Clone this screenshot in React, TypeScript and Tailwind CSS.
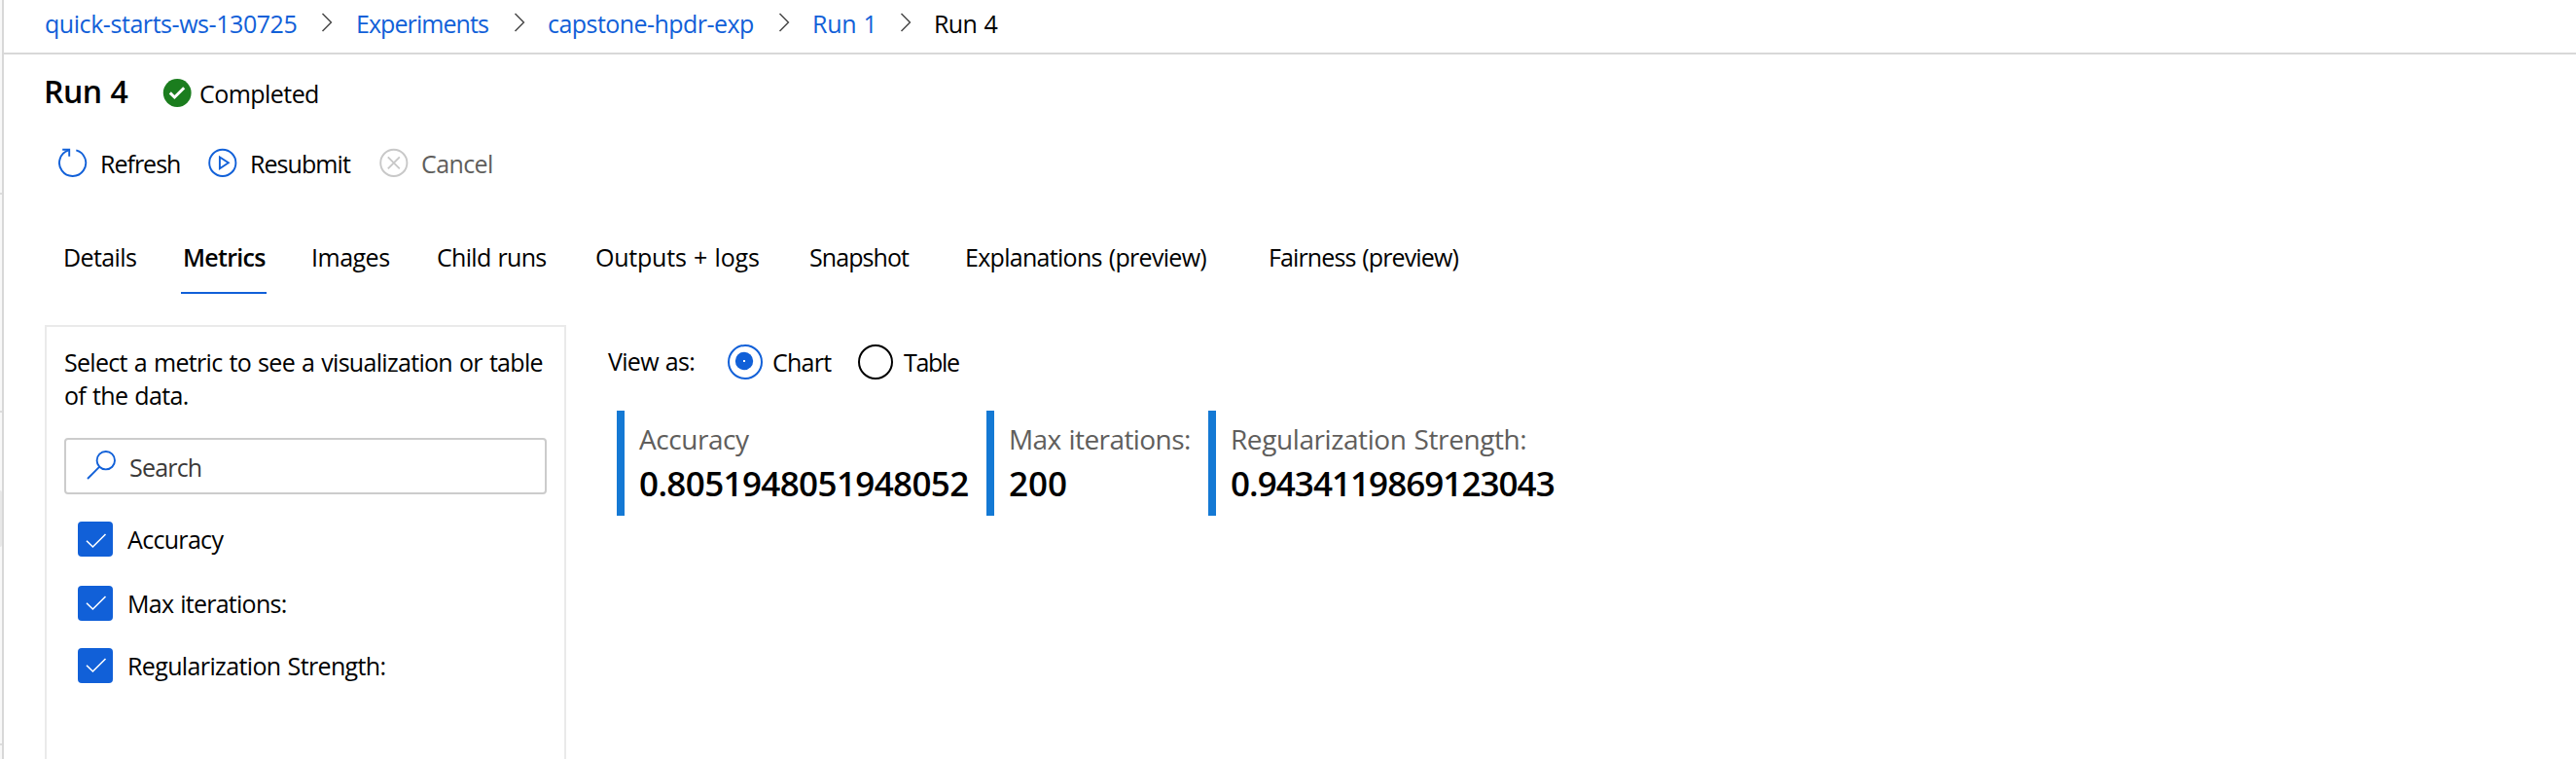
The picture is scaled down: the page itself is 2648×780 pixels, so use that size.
import React from "react";

type TextProps = { w: string; children: React.ReactNode; className?: string };

function Text({ w, children, className = "" }: TextProps) {
  return <span className={`block shrink-0 whitespace-nowrap ${w} ${className}`}>{children}</span>;
}

function Chevron({ gap }: { gap: string }) {
  return (
    <svg className={`mt-[6px] block h-5 w-3 shrink-0 ${gap}`} viewBox="0 0 12 20" fill="none" stroke="#4a4a4a" strokeWidth="1.5">
      <path d="M1.5 1 10.4 10 1.5 19" />
    </svg>
  );
}

function RefreshIcon() {
  return (
    <svg className="block h-[30px] w-[30px] shrink-0" viewBox="0 0 30 30" fill="none" stroke="#1160d8" strokeWidth="1.9">
      <path d="M18.3 2.3A13.6 13.6 0 1 1 10.6 2.4" />
      <path d="M4.2 1.7H11.2V8.7" />
    </svg>
  );
}

function PlayIcon() {
  return (
    <svg className="block h-[30px] w-[30px] shrink-0" viewBox="0 0 30 30" fill="none" stroke="#1160d8" strokeWidth="1.9">
      <circle cx="14.8" cy="15.4" r="13.6" />
      <path d="M11.9 9.4V21.2L20.8 15.3Z" />
    </svg>
  );
}

function CancelIcon() {
  return (
    <svg className="block h-[30px] w-[30px] shrink-0" viewBox="0 0 30 30" fill="none" stroke="#c8c8c8" strokeWidth="1.9">
      <circle cx="14.8" cy="15.4" r="13.6" />
      <path d="M8.8 9.4 20.8 21.4M20.8 9.4 8.8 21.4" />
    </svg>
  );
}

function DoneIcon() {
  return (
    <svg className="block h-[30px] w-[30px] shrink-0" viewBox="0 0 30 30" fill="none">
      <circle cx="15.2" cy="14.5" r="14.4" fill="#1b7d1e" />
      <path d="M7.8 14.4 12.4 19 22.2 9.2" stroke="#fff" strokeWidth="3" />
    </svg>
  );
}

function Check({ label, tracking, raised }: { label: string; tracking: string; raised: boolean }) {
  return (
    <label className="flex h-9 items-center">
      <span className="flex h-9 w-9 shrink-0 justify-center rounded bg-[#1160d8]">
        <svg className="block h-9 w-9" viewBox="0 0 36 36" fill="none" stroke="#fff" strokeWidth="1.6">
          <path d={raised ? "M9 17.8 15.4 24 28.5 11" : "M9 19.8 15.4 26 28.5 13"} />
        </svg>
      </span>
      <span className={`ml-[15px] whitespace-nowrap ${tracking}`}>{label}</span>
    </label>
  );
}

function Metric({ label, value, w, lt, vt }: { label: string; value: string; w: string; lt: string; vt: string }) {
  return (
    <div className={`h-[108px] shrink-0 border-l-8 border-[#1479d4] pt-[13px] pl-[15px] ${w}`}>
      <div className={`h-8 text-[28px] leading-8 whitespace-nowrap text-[#605e5c] ${lt}`}>{label}</div>
      <div className={`mt-[6px] h-12 text-[35px] leading-[48px] font-semibold whitespace-nowrap ${vt}`}>{value}</div>
    </div>
  );
}

export default function App() {
  return (
    <div className="flex h-[780px] w-[2648px] overflow-hidden bg-white font-['Open_Sans','Noto_Sans',sans-serif] text-[25px] leading-[34px] text-black [word-spacing:1.2px]">
      <div className="flex w-1 shrink-0 flex-col border-r-2 border-[#d8d8d8] bg-[#f8f8f8]">
        <div className="mt-[198px] h-0.5 bg-[#dcdcdc]" />
        <div className="mt-[222px] h-0.5 bg-[#dcdcdc]" />
        <div className="mt-[80px] h-[58px] rounded-r-sm bg-[#e8e8e8]" />
        <div className="mt-[202px] h-0.5 bg-[#dcdcdc]" />
      </div>
      <div className="flex flex-1 flex-col">
        <nav className="flex h-14 shrink-0 items-start border-b-2 border-[#d8d8d8] pt-[7px] pl-[42px] text-[#1160d8]">
          <Text w="w-[284px]" className="tracking-[-0.44px]">quick-starts-ws-130725</Text>
          <Chevron gap="mr-[24px]" />
          <Text w="w-[162px]" className="tracking-[-0.93px]">Experiments</Text>
          <Chevron gap="mr-[23px]" />
          <Text w="w-[237px]" className="tracking-[-0.55px]">capstone-hpdr-exp</Text>
          <Chevron gap="mr-[23px]" />
          <Text w="w-[90px]" className="tracking-[-0.3px]">Run 1</Text>
          <Chevron gap="mr-[23px]" />
          <Text w="w-[70px]" className="tracking-[-0.6px] text-black">Run 4</Text>
        </nav>

        <header className="flex h-[64px] shrink-0 items-start pt-[18px] pl-[41px]">
          <Text w="w-[122px]" className="text-[32px] leading-10 font-semibold tracking-[-0.5px]">Run 4</Text>
          <div className="mt-[7px] mr-[8px]"><DoneIcon /></div>
          <Text w="w-[130px]" className="mt-[5px] tracking-[-0.55px]">Completed</Text>
        </header>

        <div className="flex h-[110px] shrink-0 items-start pt-[32px] pl-[56px]">
          <RefreshIcon />
          <Text w="w-[111px]" className="-mt-px ml-[13px] tracking-[-1px]">Refresh</Text>
          <PlayIcon />
          <Text w="w-[133px]" className="-mt-px ml-[13px] tracking-[-0.93px]">Resubmit</Text>
          <CancelIcon />
          <Text w="w-[90px]" className="-mt-px ml-[13px] tracking-[-0.6px] text-[#605e5c]">Cancel</Text>
        </div>

        <div className="flex h-[72px] shrink-0 items-start pt-[17px] pl-[61px]">
          <Text w="w-[121px]" className="tracking-[-0.6px]">Details</Text>
          <div className="mr-[46px] h-[55px] w-[88px] shrink-0 border-b-2 border-[#1160d8] pl-[2px] font-semibold whitespace-nowrap tracking-[-0.7px]">Metrics</div>
          <Text w="w-[129px]" className="tracking-[-0.5px]">Images</Text>
          <Text w="w-[163px]" className="tracking-[-0.7px]">Child runs</Text>
          <Text w="w-[220px]" className="tracking-[-0.22px]">Outputs + logs</Text>
          <Text w="w-[160px]" className="tracking-[-0.93px]">Snapshot</Text>
          <Text w="w-[312px]" className="tracking-[-0.7px]">Explanations (preview)</Text>
          <Text w="w-[220px]" className="tracking-[-0.88px]">Fairness (preview)</Text>
        </div>

        <main className="flex flex-1 pt-[32px] pl-[42px]">
          <aside className="w-[536px] shrink-0 border-2 border-b-0 border-[#eaeaea] pt-[19px] pl-[18px]">
            <div className="tracking-[-0.69px] whitespace-nowrap">Select a metric to see a visualization or table</div>
            <div className="tracking-[-0.68px] whitespace-nowrap">of the data.</div>
            <div className="mt-[27px] flex h-[58px] w-[496px] items-start rounded border-2 border-[#cccccc] pt-[11px] pl-[21px] text-[#3b3a39]">
              <svg className="block h-[30px] w-[30px] shrink-0" viewBox="0 0 30 30" fill="none" stroke="#1160d8" strokeWidth="1.9">
                <circle cx="19.8" cy="10.2" r="9.2" />
                <path d="M13.3 16.7 1 29" />
              </svg>
              <span className="ml-[14px] tracking-[-0.8px]">Search</span>
            </div>
            <div className="mt-7 flex flex-col pl-[14px]">
              <Check label="Accuracy" tracking="tracking-[-0.68px]" raised={false} />
              <div className="mt-[30px]"><Check label="Max iterations:" tracking="tracking-[-0.74px]" raised /></div>
              <div className="mt-[28px]"><Check label="Regularization Strength:" tracking="tracking-[-0.63px]" raised /></div>
            </div>
          </aside>

          <section className="pl-[43px]">
            <div className="mt-[20px] flex h-9 items-start">
              <Text w="w-[123px]" className="tracking-[-0.7px]">View as:</Text>
              <svg className="block h-9 w-9 shrink-0" viewBox="0 0 36 36" fill="none">
                <circle cx="18" cy="18" r="17" stroke="#1160d8" strokeWidth="2" />
                <circle cx="17" cy="17" r="9.2" fill="#1160d8" />
                <path d="M16 16h2v2h-2z" fill="#fff" />
              </svg>
              <Text w="w-[88px]" className="mt-px ml-[10px] tracking-[-0.75px]">Chart</Text>
              <svg className="block h-9 w-9 shrink-0" viewBox="0 0 36 36" fill="none">
                <circle cx="18" cy="18" r="17" stroke="#000" strokeWidth="2" />
              </svg>
              <Text w="w-[80px]" className="mt-px ml-[11px] tracking-[-1.3px]">Table</Text>
            </div>
            <div className="mt-[32px] flex pl-[9px]">
              <Metric label="Accuracy" value="0.8051948051948052" w="w-[380px]" lt="tracking-[-0.45px]" vt="tracking-[-0.62px]" />
              <Metric label="Max iterations:" value="200" w="w-[228px]" lt="tracking-[-0.58px]" vt="tracking-[0px]" />
              <Metric label="Regularization Strength:" value="0.9434119869123043" w="w-[380px]" lt="tracking-[-0.41px]" vt="tracking-[-0.95px]" />
            </div>
          </section>
        </main>
      </div>
    </div>
  );
}
